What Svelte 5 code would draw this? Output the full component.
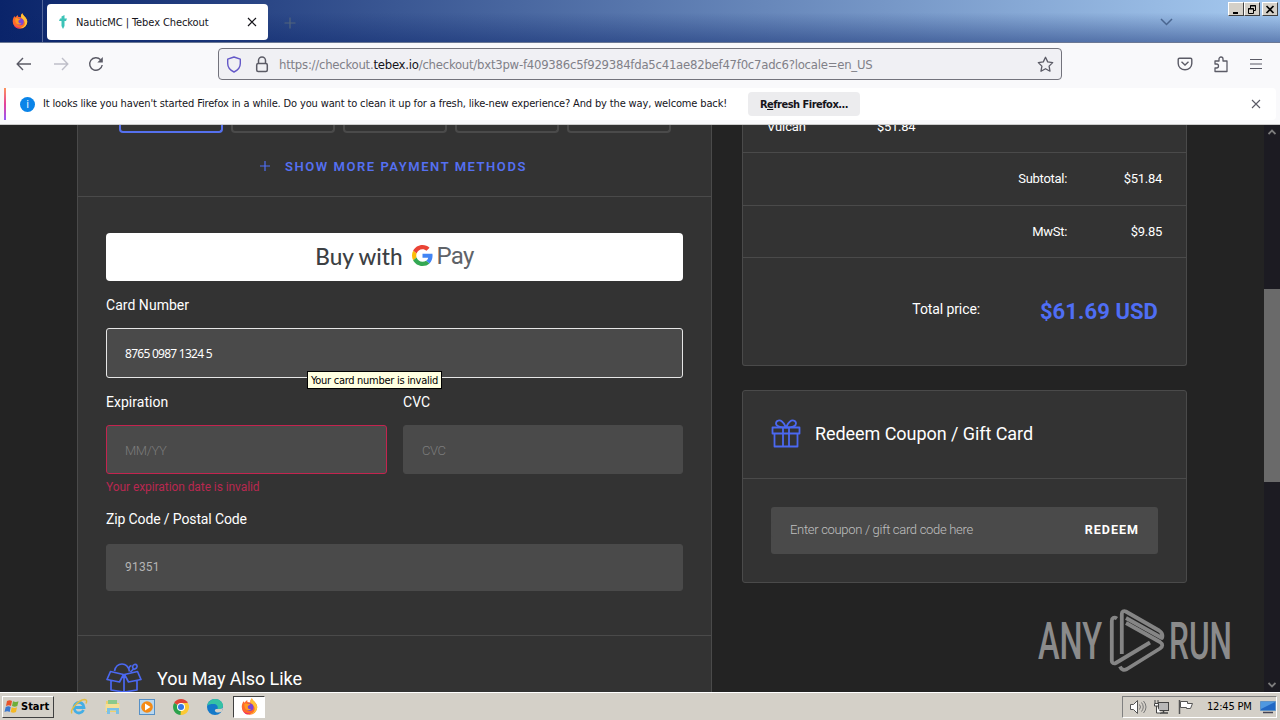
<script lang="ts">
	type Total = {
		label: string;
		value: string;
	};

	const totals: Total[] = [
		{ label: 'Subtotal:', value: '$51.84' },
		{ label: 'MwSt:', value: '$9.85' }
	];

	const methods = ['card', 'paypal', 'paysafe', 'sofort', 'giropay'];

	let selected = $state('card');
	let cardNumber = $state('8765 0987 1324 5');
	let expiration = $state('');
	let cvc = $state('');
	let zip = $state('91351');
	let coupon = $state('');
</script>

{#snippet firefox(size: number)}
	<svg width={size} height={size} viewBox="0 0 16 16">
		<path d="M8 15.800A7.300 7.300 0 0 1 .7 8.500C.7 6.500 1.300 4.500 2.500 3l.7 1.500C4 3.500 5 2.500 6 2.200L6 3.800l3 .4C8.500 3 9 1.500 10.300.3c.5 1.700 1.700 2.400 3 3.900 1.500 1.700 2 3 2 4.600A7.300 7.300 0 0 1 8 15.800z" fill="#ff6a2b" />
		<path d="M10.300.3c.5 1.700 1.700 2.400 3 3.900 2.500 3 2.500 6 .5 8.500-1.500 1.800-3.500 2.500-5 2.200 3-.9 4.500-3 4-5.500-.4-2-2-3-3.300-4.500C8.500 3.500 9 1.500 10.300.3z" fill="#ffc234" />
		<circle cx="8.200" cy="8.700" r="3.500" fill="#7a45d8" />
		<path d="M3.200 5.500c1-.6 2-.5 3 .2h2.500c0 1-2 1.200-2.300 2.200C6.200 10 8 10.800 9.500 10c-1 2-4 2-5.200.3-1-1.300-1.300-3-1.100-4.800z" fill="#ff9a22" />
		<path d="M1.200 10c1 3.300 4 4.800 7.500 4.300-2 1.800-6 1.500-7.500-4.300z" fill="#ee2f6b" />
	</svg>
{/snippet}

<div class="screen">
	<header class="titlebar">
		<div class="pinned">
			{@render firefox(16)}
		</div>
		<div class="tab">
			<svg class="favicon" width="10" height="16" viewBox="0 0 10 16">
				<path d="M3.500 2.500L6.500 1v3.500H9L8 7H6.500v5L5 15l-1.500-3V7H1l1-2.500h1.500z" fill="#3cc3b7" />
			</svg>
			<span class="tab-title">NauticMC | Tebex Checkout</span>
			<svg class="tab-close" width="10" height="10" viewBox="0 0 10 10">
				<path d="M1 1l8 8M9 1L1 9" stroke="#15141a" stroke-width="1.200" />
			</svg>
		</div>
		<svg class="new-tab" width="12" height="12" viewBox="0 0 12 12">
			<path d="M6 .5v11M.5 6h11" stroke="#52657c" stroke-width="1.200" />
		</svg>
		<svg class="all-tabs" width="13" height="8" viewBox="0 0 13 8">
			<path d="M1 1l5.500 5.500L12 1" fill="none" stroke="#4a6690" stroke-width="1.500" />
		</svg>
		<div class="window-buttons">
			<button aria-label="Minimize"><svg width="10" height="9"><path d="M2 8h5" stroke="#000" stroke-width="2" /></svg></button>
			<button aria-label="Restore">
				<svg width="10" height="9"><path d="M3.500 3V.5h5v5H7M3 1h6M1.500 3.500h5v5h-5zM1 4h6" fill="none" stroke="#000" /></svg>
			</button>
			<button class="close" aria-label="Close"><svg width="10" height="9"><path d="M1.500 1l7 7M8.500 1l-7 7" stroke="#000" stroke-width="1.700" /></svg></button>
		</div>
	</header>

	<div class="toolbar">
		<svg class="back" width="16" height="14" viewBox="0 0 16 14">
			<path d="M15 7H1.500M7 1L1.200 7 7 13" fill="none" stroke="#5b5b66" stroke-width="1.400" />
		</svg>
		<svg class="forward" width="16" height="14" viewBox="0 0 16 14">
			<path d="M1 7h13.500M9 1l5.800 6L9 13" fill="none" stroke="#bfbfc9" stroke-width="1.400" />
		</svg>
		<svg class="reload" width="16" height="16" viewBox="0 0 16 16">
			<path d="M14.200 9A6.300 6.300 0 1 1 12.600 3.700" fill="none" stroke="#5b5b66" stroke-width="1.400" />
			<path d="M14.800 1v5.500H9.300z" fill="#5b5b66" />
		</svg>
		<div class="urlbar">
			<svg width="16" height="17" viewBox="0 0 16 17">
				<path d="M8 1l6.300 2.200v4.300c0 4-3 7-6.300 8.500-3.300-1.500-6.300-4.500-6.300-8.500V3.200z" fill="none" stroke="#6458c8" stroke-width="1.400" stroke-linejoin="round" />
			</svg>
			<svg class="lock" width="14" height="17" viewBox="0 0 14 17">
				<rect x="1.700" y="7.500" width="10.600" height="8" rx="1.500" fill="none" stroke="#5b5b66" stroke-width="1.500" />
				<path d="M3.500 7.500V4.500a3.500 3.500 0 0 1 7 0v3" fill="none" stroke="#5b5b66" stroke-width="1.500" />
			</svg>
			<span class="url">https://checkout.<b>tebex.io</b>/checkout/bxt3pw-f409386c5f929384fda5c41ae82bef47f0c7adc6?locale=en_US</span>
			<svg class="star" width="17" height="17" viewBox="0 0 17 17">
				<path d="M8.500 1.300l2.200 4.600 5 .7-3.600 3.500.9 5.100-4.500-2.500L4 15.200l.9-5.100L1.300 6.600l5-.7z" fill="none" stroke="#5b5b66" stroke-width="1.300" stroke-linejoin="round" />
			</svg>
		</div>
		<div class="actions">
			<svg width="16" height="14" viewBox="0 0 16 14">
				<path d="M2.500 1.200h11c.8 0 1.300.5 1.300 1.300V6.500a6.800 6.300 0 0 1-13.600 0V2.500c0-.8.5-1.300 1.300-1.300z" fill="none" stroke="#5b5b66" stroke-width="1.400" />
				<path d="M4.500 4.800L8 8l3.500-3.200" fill="none" stroke="#5b5b66" stroke-width="1.400" />
			</svg>
			<svg width="16" height="17" viewBox="0 0 16 17">
				<path d="M2 5h4V3a2 2 0 0 1 4 0v2h4v10.500H2V12h1.500a2 2 0 0 0 0-4H2z" fill="none" stroke="#5b5b66" stroke-width="1.300" stroke-linejoin="round" />
			</svg>
			<svg width="14" height="12" viewBox="0 0 14 12">
				<path d="M1 1.500h12M1 6h12M1 10.500h12" stroke="#5b5b66" stroke-width="1.200" />
			</svg>
		</div>
	</div>

	<div class="notice-wrap">
		<div class="notice">
			<span class="info">i</span>
			<span class="notice-text">It looks like you haven't started Firefox in a while. Do you want to clean it up for a fresh, like-new experience? And by the way, welcome back!</span>
			<button class="refresh">R<u>e</u>fresh Firefox...</button>
			<svg class="notice-close" width="10" height="10" viewBox="0 0 10 10">
				<path d="M1 1l8 8M9 1L1 9" stroke="#5b5b66" stroke-width="1.100" />
			</svg>
		</div>
	</div>

	<main class="page">
		<section class="panel checkout">
			<div class="methods">
				<div class="tiles">
					{#each methods as method}
						<button class="tile" class:selected={selected === method} aria-label={method} onclick={() => (selected = method)}></button>
					{/each}
				</div>
				<div class="more">
					<svg width="12" height="12" viewBox="0 0 12 12"><path d="M6 1v10M1 6h10" stroke="#4f6ef5" stroke-width="1.200" /></svg>
					<span>SHOW MORE PAYMENT METHODS</span>
				</div>
			</div>

			<form class="form">
				<button type="button" class="gpay">
					<span class="buy">Buy with</span>
					<svg width="21" height="21" viewBox="0 0 48 48">
						<path fill="#ea4335" d="M24 9.500c3.540 0 6.710 1.220 9.210 3.600l6.850-6.850C35.900 2.380 30.470 0 24 0 14.620 0 6.510 5.380 2.560 13.220l7.980 6.190C12.430 13.720 17.740 9.500 24 9.500z" />
						<path fill="#4285f4" d="M46.980 24.550c0-1.570-.15-3.090-.38-4.550H24v9.020h12.940c-.58 2.960-2.260 5.480-4.780 7.180l7.730 6c4.510-4.180 7.090-10.360 7.090-17.650z" />
						<path fill="#fbbc05" d="M10.530 28.590c-.48-1.450-.76-2.990-.76-4.590s.27-3.140.76-4.590l-7.980-6.190C.92 16.460 0 20.120 0 24c0 3.880.92 7.540 2.560 10.780l7.970-6.190z" />
						<path fill="#34a853" d="M24 48c6.480 0 11.930-2.130 15.890-5.810l-7.730-6c-2.150 1.450-4.920 2.300-8.160 2.300-6.260 0-11.570-4.220-13.470-9.910l-7.980 6.190C6.510 42.620 14.620 48 24 48z" />
					</svg>
					<span class="pay">Pay</span>
				</button>

				<label for="card">Card Number</label>
				<input id="card" class="card-input" bind:value={cardNumber} />

				<div class="pair">
					<div class="field">
						<label for="exp">Expiration</label>
						<input id="exp" class="invalid" placeholder="MM/YY" bind:value={expiration} />
						<p class="error">Your expiration date is invalid</p>
					</div>
					<div class="field cvc">
						<label for="cvc">CVC</label>
						<input id="cvc" placeholder="CVC" bind:value={cvc} />
					</div>
				</div>

				<label for="zip" class="zip-label">Zip Code / Postal Code</label>
				<input id="zip" class="zip-input" bind:value={zip} />
			</form>

			<div class="also">
				<svg width="36" height="30" viewBox="0 0 36 30" fill="none" stroke="#4b68f0" stroke-width="1.700" stroke-linejoin="round">
					<path d="M4.500 8.500L17.500 11.500 13.500 19 1 16.500zM31.500 8.500L18.500 11.500 22.500 19 35 16.500zM5 18v9l13 2 13-2v-9M18 12v17" />
					<path d="M8.500 8C9.500 3.500 12.500 1 16 1s6.500 3 7.500 7.500M24.500 9l3-3c-1.500-1.500-1-4 1-4.500s3.500 1.500 2 3.500l-2.500 1.500M23 7c-.5-2 .5-4 2.500-4.500" />
				</svg>
				<h2>You May Also Like</h2>
			</div>
		</section>

		<aside class="side">
			<section class="panel summary">
				<div class="item">
					<span class="item-name">Vulcan</span>
					<span>$51.84</span>
				</div>
				{#each totals as total}
					<div class="total-row">
						<span>{total.label}</span>
						<span class="value">{total.value}</span>
					</div>
				{/each}
				<div class="grand">
					<span class="grand-label">Total price:</span>
					<strong>$61.69 USD</strong>
				</div>
			</section>

			<section class="panel coupon">
				<div class="coupon-head">
					<svg width="30" height="30" viewBox="0 0 30 30" fill="none" stroke="#4b68f0" stroke-width="1.800" stroke-linejoin="round">
						<path d="M1.500 8.500h27v6h-27zM3.500 14.500h23v13h-23zM12 8.500v19M18 8.500v19" />
						<path d="M15 8.500C12 8.500 5 8 5 4.500 5 1 9 .8 11 2.500c2 1.500 3 4 4 6 1-2 2-4.500 4-6 2-1.700 6-1.500 6 2 0 3.500-7 4-10 4z" />
					</svg>
					<h2>Redeem Coupon / Gift Card</h2>
				</div>
				<div class="coupon-box">
					<input placeholder="Enter coupon / gift card code here" bind:value={coupon} />
					<button>REDEEM</button>
				</div>
			</section>
		</aside>

		<div class="scrollbar">
			<svg width="8" height="6" viewBox="0 0 8 6"><path d="M.5 5L4 1.500 7.500 5" fill="none" stroke="#7d7d7d" stroke-width="1.800" /></svg>
			<div class="thumb"></div>
			<svg width="8" height="6" viewBox="0 0 8 6"><path d="M.5 1L4 4.500 7.500 1" fill="none" stroke="#7d7d7d" stroke-width="1.800" /></svg>
		</div>
	</main>

	<footer class="taskbar">
		<button class="start">
			<svg width="16" height="15" viewBox="0 0 16 15">
				<path d="M3 2c2-1 3.500-1 5 0L7 7C5.500 6 4 6 2 7z" fill="#e8532a" />
				<path d="M9 2.300c2 1 3.500 1 5.500 0L13.300 7C11.500 8 10 8 8 7z" fill="#6fae3a" />
				<path d="M1.700 8c2-1 3.500-1 5 0l-1 5C4 12 2.500 12 .5 13z" fill="#3b78cf" />
				<path d="M7.700 8.300c2 1 3.500 1 5.300 0L12 13c-2 1-3.500 1-5.300 0z" fill="#f4b824" />
			</svg>
			Start
		</button>
		<div class="quick">
			<svg width="18" height="18" viewBox="0 0 18 18">
				<path d="M13.500 12A5 5.300 0 1 1 14 9.500H5" fill="none" stroke="#43aee5" stroke-width="2.800" />
				<path d="M2 15.500C-1 13 8 2 14.500 1.500c2.500 0 2.500 2 1.500 4" fill="none" stroke="#e2bd45" stroke-width="1.500" />
			</svg>
			<svg width="18" height="18" viewBox="0 0 18 18">
				<path d="M2 3h5l1 2h7v9H2z" fill="#efcf6c" />
				<path d="M4 2h9v5H4z" fill="#8bc98a" />
				<path d="M1.500 6h14v7h-14z" fill="#f5df95" />
				<path d="M3 16v-6h12v6h-3v-3.500H6V16z" fill="#7cc1e6" />
			</svg>
			<svg width="18" height="18" viewBox="0 0 18 18">
				<rect x="1.500" y="1.500" width="15" height="15" fill="#b9d7ef" stroke="#5690c6" />
				<circle cx="9" cy="9" r="5.800" fill="#f48a16" />
				<path d="M7 5.500v7L12.500 9z" fill="#fff" />
			</svg>
			<svg width="18" height="18" viewBox="0 0 18 18">
				<path d="M9 9L2.100 5A8 8 0 0 1 15.900 5z" fill="#df4436" />
				<path d="M9 9L2.100 5A8 8 0 0 0 9 17l3.500-6z" fill="#2ba24c" />
				<path d="M9 9l-.5 8A8 8 0 0 0 15.900 5H9z" fill="#fcc934" />
				<circle cx="9" cy="9" r="4" fill="#fff" />
				<circle cx="9" cy="9" r="3" fill="#3578e5" />
			</svg>
			<svg width="18" height="18" viewBox="0 0 18 18">
				<circle cx="9" cy="9" r="8" fill="#1479c9" />
				<path d="M1.200 8C2 3 6 1 9 1c5 0 8 3.500 8 6.500 0 3-3 4-5.500 3.500 1-3-1-5-4-5S2 6.500 1.200 8z" fill="#35c2a5" />
				<path d="M11.500 11c-2 0-3 .5-2.500 2 1 2 4.500 2 7 .5l1-4c-1.500 1.500-3.500 1.800-5.500 1.500z" fill="#d4d0c8" />
			</svg>
			<div class="running">
				{@render firefox(17)}
			</div>
		</div>
		<div class="tray">
			<svg width="18" height="16" viewBox="0 0 18 16">
				<path d="M1.500 5.500h3L8.500 1.500v13l-4-4h-3z" fill="#fff" stroke="#555" />
				<path d="M10.500 5.500q2 2.500 0 5M12.500 3.500q3.500 4.500 0 9M14.500 2q5 6 0 12" fill="none" stroke="#777" />
			</svg>
			<svg width="18" height="16" viewBox="0 0 18 16">
				<rect x="5.500" y="3.500" width="10" height="8" fill="#b8b8b8" stroke="#444" />
				<path d="M7 14h8M10.500 12v2" stroke="#444" stroke-width="1.500" />
				<path d="M2 1v3M5 1v3M1.500 4.500h4V7h-4zM3.500 7v7H8" fill="#fff" stroke="#444" />
			</svg>
			<svg width="18" height="16" viewBox="0 0 18 16">
				<path d="M2.500 1v14" stroke="#555" stroke-width="1.500" />
				<path d="M3.500 2.500h7v2h5l-2 5H9.500v-1h-6z" fill="#fff" stroke="#555" />
			</svg>
			<span class="clock">12:45 PM</span>
			<svg width="16" height="14" viewBox="0 0 16 14">
				<path d="M.5 1.500h15v9H.5z" fill="#2268c4" stroke="#5f93c6" />
				<path d="M1 2h14L1 9z" fill="#4f98e0" />
				<path d="M3 12.500h10" stroke="#445" stroke-width="1.500" />
			</svg>
		</div>
	</footer>

	<div class="tooltip" role="tooltip">Your card number is invalid</div>

	<svg class="watermark" width="204" height="64" viewBox="0 0 204 64">
		<g fill="#8b8b8b">
			<text x="0" y="50" textLength="64" lengthAdjust="spacingAndGlyphs">ANY</text>
			<text x="131" y="50" textLength="63" lengthAdjust="spacingAndGlyphs">RUN</text>
		</g>
		<g fill="none" stroke="#858585" stroke-width="3.800" stroke-linejoin="round">
			<path d="M79 9.500C76 7.500 73.800 9 73.800 12v40c0 2 2 3 4 2L112 33.500" />
			<path d="M83.800 45V5c0-2.500 2-3.500 4-2.500L121 21.500c3 2 4 4.500 3 7.500L88 9" />
			<path d="M82 57.500c1.500 3.500 4 4 7 2.500L122 39.500c3-2 3-4.500 0-6.500L88 14" />
		</g>
	</svg>
</div>

<style>
	:global(body) {
		margin: 0;
		overflow: hidden;
	}

	* {
		box-sizing: border-box;
	}

	svg {
		display: block;
		flex: none;
	}

	button,
	input {
		font: inherit;
		border: 0;
		padding: 0;
		margin: 0;
	}

	.screen {
		--ui: 'DejaVu Sans Condensed', 'DejaVu Sans', sans-serif;
		--panel: #333333;
		--line: #4a4a4a;
		--blue: #4f6ef5;
		position: relative;
		width: 1280px;
		height: 720px;
		display: flex;
		flex-direction: column;
		overflow: hidden;
		font-family: Roboto, sans-serif;
		color: #fff;
		white-space: nowrap;
	}

	.titlebar {
		display: flex;
		align-items: center;
		height: 43px;
		flex: none;
		border-bottom: 1px solid #6b7894;
		background: linear-gradient(to bottom, transparent 30%, rgba(10, 36, 106, 0.45)), linear-gradient(to right, #0a246a, #a6caf0);
	}

	.pinned {
		display: flex;
		justify-content: center;
		width: 43px;
		height: 100%;
		align-items: center;
		border-right: 1px solid #53679a;
		padding-right: 2px;
	}

	.tab {
		display: flex;
		align-items: center;
		width: 221px;
		height: 36px;
		margin-left: 4px;
		margin-top: 1px;
		padding: 0 11px;
		background: #fff;
		border-radius: 4px;
		color: #15141a;
		font: 11px var(--ui);
	}

	.tab-title {
		margin-left: 8px;
		margin-top: 2px;
		letter-spacing: -0.08px;
	}

	.tab-close {
		margin-left: auto;
	}

	.new-tab {
		margin-top: 3px;
		margin-left: 16px;
	}

	.all-tabs {
		margin-left: auto;
		margin-right: 55px;
		margin-top: 1px;
	}

	.window-buttons {
		display: flex;
		align-self: flex-start;
		margin: 2px 2px 0 0;
	}

	.window-buttons button {
		display: flex;
		align-items: center;
		justify-content: center;
		width: 16px;
		height: 14px;
		background: #d4d0c8;
		border: 1px solid;
		border-color: #fff #404040 #404040 #fff;
	}

	.window-buttons .close {
		margin-left: 2px;
	}

	.toolbar {
		display: flex;
		align-items: center;
		height: 43px;
		flex: none;
		padding-bottom: 1px;
		background: #f9f9fb;
	}

	.back {
		margin-left: 16px;
	}

	.forward {
		margin-left: 21px;
	}

	.reload {
		margin-left: 19px;
	}

	.urlbar {
		display: flex;
		align-items: center;
		width: 844px;
		height: 32px;
		margin-left: 114px;
		padding: 0 7px;
		background: #f0f0f4;
		border: 1px solid #73737c;
		border-radius: 4px;
	}

	.lock {
		margin-left: 13px;
	}

	.url {
		margin-left: 10px;
		font: 13px var(--ui);
		letter-spacing: -0.245px;
		color: #808088;
	}

	.url b {
		font-weight: 400;
		color: #15141a;
	}

	.star {
		margin-left: auto;
	}

	.actions {
		display: flex;
		align-items: center;
		gap: 20px;
		margin-left: auto;
		margin-right: 17px;
	}

	.notice-wrap {
		height: 39px;
		flex: none;
		padding: 2px 4px 0;
		background: #f9f9fb;
		border-bottom: 1px solid #cccccc;
	}

	.notice {
		display: flex;
		align-items: center;
		height: 32px;
		padding: 0 15px 0 14px;
		background: #fff;
		border-radius: 4px;
		color: #15141a;
		font: 11px var(--ui);
		border-left: 2px solid;
		border-image: linear-gradient(#ff9a57, #e5419a, #9059ff) 1;
	}

	.info {
		width: 15px;
		height: 15px;
		border-radius: 50%;
		background: #0a84e8;
		color: #fff;
		text-align: center;
		line-height: 15px;
	}

	.notice-text {
		margin-left: 8px;
		margin-bottom: 2px;
		width: 684px;
		letter-spacing: -0.145px;
	}

	.refresh {
		width: 112px;
		height: 24px;
		margin-left: 21px;
		background: #ececee;
		border-radius: 4px;
		color: #15141a;
		font-weight: 700;
		letter-spacing: -0.5px;
	}

	.notice-close {
		margin-left: auto;
	}

	.page {
		display: flex;
		align-items: flex-start;
		height: 567px;
		flex: none;
		overflow: hidden;
		background: #232323;
	}

	.panel {
		background: var(--panel);
		border: 1px solid var(--line);
		border-radius: 3px;
	}

	.checkout {
		width: 635px;
		height: 600px;
		margin-left: 77px;
		border-top: 0;
		border-radius: 0;
	}

	.methods {
		height: 72px;
		border-bottom: 1px solid var(--line);
	}

	.tiles {
		display: flex;
		gap: 8px;
		padding-left: 41px;
	}

	.tile {
		width: 104px;
		height: 8px;
		background: transparent;
		border: 2px solid #4a4a4a;
		border-top: 0;
		border-radius: 0 0 4px 4px;
	}

	.tile.selected {
		border-color: #5570ee;
	}

	.more {
		display: flex;
		align-items: center;
		height: 20px;
		margin-top: 23px;
		padding-left: 181px;
		color: #5570f2;
		font-size: 13px;
		font-weight: 600;
		letter-spacing: 1.55px;
	}

	.more span {
		margin-left: 14px;
	}

	.form {
		display: flex;
		flex-direction: column;
		height: 439px;
		padding: 36px 28px 0;
		border-bottom: 1px solid var(--line);
	}

	.gpay {
		display: flex;
		align-items: center;
		justify-content: center;
		height: 48px;
		flex: none;
		padding-bottom: 2px;
		background: #fff;
		border-radius: 4px;
		color: #3c4043;
	}

	.buy {
		margin-right: 9px;
		font-family: Lato, sans-serif;
		font-size: 22.5px;
		font-weight: 500;
	}

	.gpay svg {
		margin-bottom: 2px;
	}

	.pay {
		margin-left: 4px;
		color: #5f6368;
		font-size: 24px;
		letter-spacing: -0.7px;
	}

	label {
		display: block;
		height: 20px;
		line-height: 20px;
		font-size: 14px;
		letter-spacing: 0.03px;
	}

	.zip-label {
		letter-spacing: -0.13px;
	}

	.gpay + label {
		margin-top: 14px;
	}

	input {
		display: block;
		width: 100%;
		background: #4a4a4a;
		border: 1px solid #4a4a4a;
		border-radius: 3px;
		padding: 0 18px;
		outline: 0;
		color: #fff;
	}

	input::placeholder {
		color: #7c7c7c;
		opacity: 1;
	}

	.card-input {
		height: 50px;
		flex: none;
		margin-top: 13px;
		border-color: #e6e6e6;
		font: 12px 'Noto Sans', sans-serif;
		letter-spacing: -0.73px;
	}

	.pair {
		display: flex;
		gap: 16px;
		margin-top: 14px;
		height: 117px;
		flex: none;
	}

	.field {
		width: 281px;
	}

	.field.cvc {
		width: 280px;
	}

	.field input {
		height: 49px;
		margin-top: 13px;
		padding-top: 2px;
		font: 300 13px Roboto, sans-serif;
		letter-spacing: -0.4px;
	}

	.field .invalid {
		border-color: #c4244f;
	}

	.error {
		margin: 4px 0 0;
		font-size: 12px;
		line-height: 18px;
		color: #b82850;
		letter-spacing: -0.08px;
	}

	.zip-input {
		height: 47px;
		flex: none;
		margin-top: 15px;
		padding-bottom: 2px;
		color: #b5b5b5;
		font-size: 12px;
		letter-spacing: 0.2px;
	}

	.also {
		display: flex;
		align-items: center;
		height: 84px;
		padding: 0 28px;
	}

	h2 {
		margin: 0;
		font-size: 18px;
		font-weight: 400;
		letter-spacing: -0.06px;
	}

	.also h2 {
		margin-left: 15px;
	}

	.side {
		display: flex;
		flex-direction: column;
		gap: 24px;
		width: 445px;
		margin-left: 30px;
	}

	.summary {
		height: 241px;
		border-top: 0;
		border-radius: 0 0 3px 3px;
		font-size: 13px;
		letter-spacing: -0.3px;
	}

	.item {
		display: flex;
		height: 28px;
		padding-left: 24px;
		line-height: 4px;
		border-bottom: 1px solid var(--line);
	}

	.item-name {
		width: 110px;
		letter-spacing: -0.1px;
	}

	.total-row {
		display: flex;
		align-items: center;
		justify-content: flex-end;
		height: 53px;
		padding: 0 24px 1px 0;
		border-bottom: 1px solid var(--line);
	}

	.total-row + .total-row {
		height: 52px;
		padding-bottom: 0;
	}

	.value {
		width: 95px;
		text-align: right;
	}

	.grand {
		display: flex;
		align-items: center;
		justify-content: flex-end;
		height: 106px;
		padding-right: 28px;
		letter-spacing: 0;
	}

	.grand-label {
		font-size: 14px;
		letter-spacing: -0.1px;
		margin-bottom: 5px;
	}

	.grand strong {
		width: 178px;
		text-align: right;
		color: var(--blue);
		font-size: 22px;
		font-weight: 700;
		letter-spacing: 0.08px;
	}

	.coupon {
		height: 193px;
	}

	.coupon-head {
		display: flex;
		align-items: center;
		height: 88px;
		padding: 0 28px 2px;
		border-bottom: 1px solid var(--line);
	}

	.coupon-head h2 {
		margin-left: 14px;
	}

	.coupon-box {
		display: flex;
		align-items: center;
		height: 47px;
		margin: 28px 28px 0;
		padding: 0 19px 2px 0;
		background: #4a4a4a;
		border-radius: 3px;
	}

	.coupon-box input {
		flex: 1;
		font-size: 13px;
		font-weight: 300;
		letter-spacing: -0.31px;
	}

	.coupon-box input::placeholder {
		color: #c0c0c0;
	}

	.coupon-box button {
		background: none;
		color: #fff;
		font-size: 12.5px;
		font-weight: 700;
		letter-spacing: 1px;
	}

	.scrollbar {
		display: flex;
		flex-direction: column;
		align-items: center;
		width: 16px;
		height: 567px;
		margin-left: auto;
		padding: 4px 0 4px;
		background: #1c1b22;
	}

	.thumb {
		width: 16px;
		height: 193px;
		margin: 154px 0 auto;
		background: #6a6a6a;
	}

	.taskbar {
		display: flex;
		align-items: center;
		height: 28px;
		background: #d4d0c8;
		border-top: 1px solid #fff;
		color: #000;
	}

	.start {
		display: flex;
		align-items: center;
		gap: 1px;
		width: 52px;
		height: 22px;
		margin-left: 2px;
		padding-left: 1px;
		background: #d4d0c8;
		border: 1px solid;
		border-color: #fff #404040 #404040 #fff;
		color: #000;
		font: 700 11px var(--ui);
	}

	.quick {
		display: flex;
		align-items: center;
		gap: 16px;
		margin-left: 16px;
	}

	.running {
		display: flex;
		align-items: center;
		justify-content: center;
		width: 32px;
		height: 22px;
		margin-left: -7px;
		background: #fff;
		border: 1px solid;
		border-color: #404040 #fff #fff #404040;
	}

	.tray {
		display: flex;
		align-items: center;
		gap: 6px;
		width: 155px;
		height: 22px;
		margin-left: auto;
		margin-right: 3px;
		padding-left: 6px;
		border: 1px solid;
		border-color: #808080 #fff #fff #808080;
	}

	.clock {
		width: 48px;
		margin-left: 6px;
		font: 11px var(--ui);
		letter-spacing: -0.2px;
	}

	.tooltip {
		position: absolute;
		left: 307px;
		top: 371px;
		width: 135px;
		height: 18px;
		padding-left: 3px;
		background: #ffffe1;
		border: 1px solid #000;
		color: #000;
		font: 11px var(--ui);
		line-height: 17px;
		letter-spacing: -0.28px;
	}

	.watermark {
		position: absolute;
		left: 1038px;
		top: 609px;
	}

	.watermark text {
		font-family: Roboto, sans-serif;
		font-size: 52px;
		font-weight: 500;
	}
</style>
